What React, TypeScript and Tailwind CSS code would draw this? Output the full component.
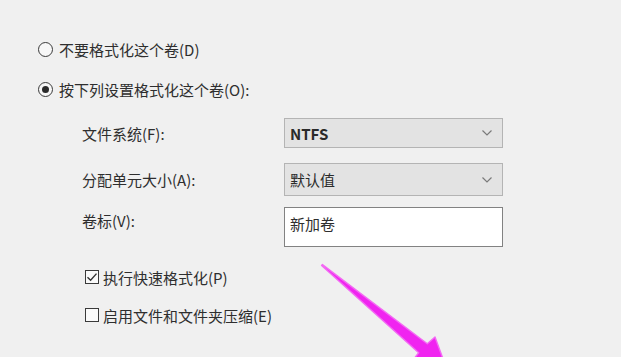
import React from 'react'

// Format-partition dialog fragment, with a pink annotation arrow on top

function Radio({ checked }: { checked?: boolean }) {
  return (
    <span className="flex h-[15px] w-[15px] shrink-0 items-center justify-center rounded-full border border-[#3a3a3a] bg-[#f7f7f7]">
      {checked && <span className="h-[7px] w-[7px] rounded-full bg-[#2a2a2a]" />}
    </span>
  )
}

function Checkbox({ checked }: { checked?: boolean }) {
  return (
    <span className="flex h-[14px] w-[14px] shrink-0 items-center justify-center border border-[#3a3a3a] bg-[#fafafa]">
      {checked && (
        <svg width="12" height="12" viewBox="0 0 12 12" fill="none">
          <polyline points="1.5,6.2 4.6,9.2 10.5,2.6" stroke="#333" strokeWidth="1.4" />
        </svg>
      )}
    </span>
  )
}

function Chevron() {
  return (
    <svg width="12" height="8" viewBox="0 0 12 8" fill="none">
      <polyline points="1.5,1.5 6,6 10.5,1.5" stroke="#7a7a7a" strokeWidth="1.2" />
    </svg>
  )
}

function Select({ value, bold }: { value: string; bold?: boolean }) {
  return (
    <div className="flex h-full w-[219px] items-center justify-between border border-[#b4b4b4] bg-[#e3e3e3] pl-[5px] pr-[9px]">
      <span className={bold ? 'font-semibold text-[#2a2a2a]' : 'text-[#2a2a2a]'}>{value}</span>
      <Chevron />
    </div>
  )
}

export default function App() {
  return (
    <div className="w-[621px] overflow-hidden font-['Noto_Sans_CJK_SC','Noto_Sans',sans-serif] text-[15px] leading-none text-[#2e2e2e]">
      <div className="relative h-[357px] overflow-hidden bg-[#f0f0f0] pl-[38px] pt-[40px]">
        <div className="flex h-[18px] items-center gap-[6px]">
          <Radio />
          <span>不要格式化这个卷(D)</span>
        </div>
        <div className="mt-[22px] flex h-[18px] items-center gap-[6px]">
          <Radio checked />
          <span>按下列设置格式化这个卷(O):</span>
        </div>

        <div className="ml-[44px] mt-[20px] flex flex-col">
          <div className="flex h-[30px] items-center">
            <span className="w-[202px]">文件系统(F):</span>
            <Select value="NTFS" bold />
          </div>
          <div className="mt-[15px] flex h-[33px] items-center">
            <span className="w-[202px]">分配单元大小(A):</span>
            <Select value="默认值" />
          </div>
          <div className="mt-[11px] flex h-[40px] items-start">
            <span className="w-[202px] pt-[6px]">卷标(V):</span>
            <div className="h-full w-[219px] border border-[#828282] bg-white pl-[5px] pt-[8px]">新加卷</div>
          </div>
        </div>

        <div className="ml-[47px] mt-[22px] flex h-[16px] items-center gap-[4px]">
          <Checkbox checked />
          <span>执行快速格式化(P)</span>
        </div>
        <div className="ml-[47px] mt-[22px] flex h-[16px] items-center gap-[4px]">
          <Checkbox />
          <span>启用文件和文件夹压缩(E)</span>
        </div>

        {/* annotation arrow */}
        <svg className="pointer-events-none absolute left-0 top-0" width="621" height="357" viewBox="0 0 621 357">
          <polygon
            points="322.4,264.6 427.3,343.8 435,337 446,367 413,360 418.7,352.8 321.6,265.4"
            fill="#f024f0"
            stroke="#f36af3"
            strokeWidth="1.4"
            strokeLinejoin="round"
          />
        </svg>
      </div>
      <div className="h-[5px] bg-white" />
    </div>
  )
}
